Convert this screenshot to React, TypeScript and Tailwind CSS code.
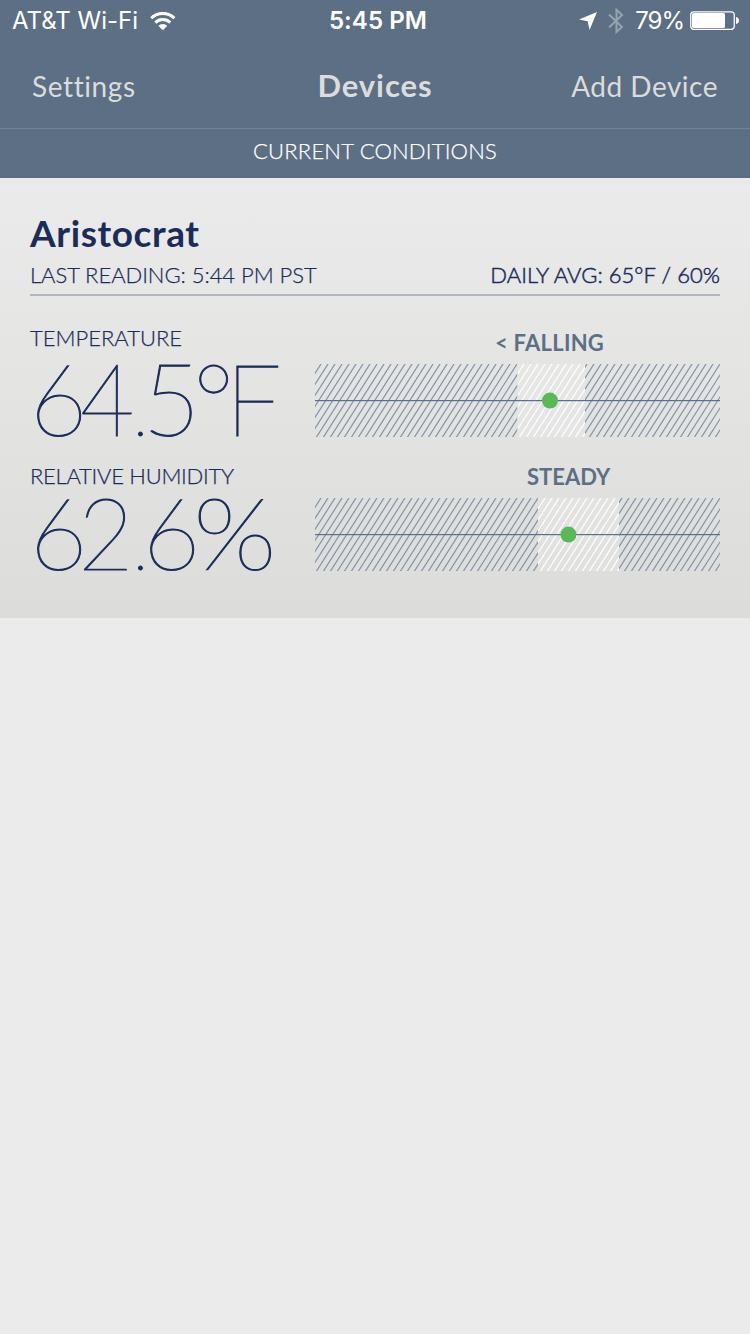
type Glyph = { ch: string; style: string };

type MetricProps = {
  id: string;
  label: string;
  labelStyle: string;
  glyphs: Glyph[];
  trend: string;
  trendStyle: string;
  from: number;
  to: number;
  value: number;
};

function Range({ id, from, to, value }: { id: string; from: number; to: number; value: number }) {
  const lines = Array.from({ length: 66 }, (_, i) => 6 + i * 7);
  const draw = (stroke: string) =>
    lines.map((x) => <line key={x} x1={x + 1.27} y1={-2} x2={x - 47.73} y2={75} stroke={stroke} strokeWidth={1.2} />);
  return (
    <svg width="405" height="73" viewBox="0 0 405 73" className="block shrink-0">
      <defs>
        <clipPath id={id + "-out"}>
          <rect x="0" y="0" width={from} height="73" />
          <rect x={to} y="0" width={405 - to} height="73" />
        </clipPath>
        <clipPath id={id + "-in"}>
          <rect x={from} y="0" width={to - from} height="73" />
        </clipPath>
      </defs>
      <rect x={from} y="0" width={to - from} height="73" fill="#ffffff" fillOpacity="0.1" />
      <g clipPath={`url(#${id}-out)`}>{draw("#8294a8")}</g>
      <g clipPath={`url(#${id}-in)`}>{draw("#ffffff")}</g>
      <rect x="0" y="36" width="405" height="1.2" fill="#5c6f8e" />
      <circle cx={value} cy="36.6" r="8" fill="#5ab955" />
    </svg>
  );
}

function Metric({ id, label, labelStyle, glyphs, trend, trendStyle, from, to, value }: MetricProps) {
  return (
    <section className="flex h-[134px]">
      <div className="w-[285px] shrink-0">
        <div className={`h-8 text-[22px] leading-9 font-light [-webkit-text-stroke:0.25px] ${labelStyle}`}>{label}</div>
        <div className="flex h-[90px] items-baseline text-[100px] leading-[90px] font-thin [-webkit-text-stroke:1px]">
          {glyphs.map((g, i) => (
            <span key={i} className={g.style}>
              {g.ch}
            </span>
          ))}
        </div>
      </div>
      <div className="w-[405px]">
        <div className="h-11 pt-[9px] text-[22px] leading-7 font-bold text-[#5c6f84]">
          <span className={trendStyle}>{trend}</span>
        </div>
        <Range id={id} from={from} to={to} value={value} />
      </div>
    </section>
  );
}

const temperature: Glyph[] = [
  { ch: "6", style: "-ml-[0.5px] mr-[-7.5px]" },
  { ch: "4", style: "mr-[-9.5px] origin-left scale-x-[0.94]" },
  { ch: ".", style: "ml-[5px] mr-[-5px] text-[60px]" },
  { ch: "5", style: "mr-[-7.5px]" },
  { ch: "°", style: "mr-[-11px]" },
  { ch: "F", style: "origin-left pl-0.5" },
];

const humidity: Glyph[] = [
  { ch: "6", style: "-ml-[0.5px] mr-[-10px]" },
  { ch: "2", style: "mr-[-7px] origin-left scale-x-[0.96]" },
  { ch: ".", style: "ml-[5px] mr-[-5px] text-[60px]" },
  { ch: "6", style: "mr-[-7.5px]" },
  { ch: "%", style: "origin-left scale-x-110" },
];

export default function App() {
  return (
    <div className="flex h-[1334px] w-[750px] flex-col bg-[#ebebeb] font-['Lato',sans-serif] text-[#1b2c5c] [font-variant-ligatures:none]">
      <header className="flex h-[178px] flex-col bg-[#5c6f84] text-white">
        <div className="grid h-[42px] grid-cols-[1fr_auto_1fr] items-center pr-2.5 pl-3 font-['Inter',sans-serif] text-2xl">
          <div className="flex items-center gap-3">
            <span>AT&amp;T Wi-Fi</span>
            <svg width="26" height="19" viewBox="0 0 26 19" fill="none" stroke="#fff" strokeWidth="3">
              <path d="M1.2 6.2a16.5 16.5 0 0 1 23.2 0M5.3 10.6a10.8 10.8 0 0 1 15 0" />
              <path d="M8.4 13.8a6.5 6.5 0 0 1 8.8 0l-4.4 4.4z" fill="#fff" stroke="none" />
            </svg>
          </div>
          <span className="pl-1 font-semibold tracking-[0.1px]">5:45 PM</span>
          <div className="flex items-center justify-end">
            <svg width="18" height="18" viewBox="0 0 18 18" className="mr-[11px]">
              <path d="M18 0L10.500 18L8.700 9.300L0 7.500z" fill="#fff" />
            </svg>
            <svg width="16" height="28" viewBox="0 0 16 28" className="mr-[11px]" fill="none" stroke="#95a2b0" strokeWidth="2">
              <path d="M1 7.5L14 20 8.500 25V2.800L14 8 1 20.5" />
            </svg>
            <span className="mr-1.5 tracking-[-1px]">79%</span>
            <svg width="50" height="19" viewBox="0 0 50 19" className="-translate-y-px">
              <rect x="0.75" y="0.75" width="43.5" height="17.5" rx="3" fill="none" stroke="#fff" strokeWidth="1.25" />
              <rect x="2" y="2" width="33" height="15" rx="1.5" fill="#fff" />
              <path d="M46 6c4 .5 4 6.500 0 7z" fill="#fff" />
            </svg>
          </div>
        </div>
        <div className="grid h-[86px] grid-cols-3 items-baseline px-8 pt-[23px] text-[28px] leading-10 text-[#dcdcda]">
          <span className="tracking-[0.6px]">Settings</span>
          <span className="text-center text-[31px] font-bold tracking-[0.9px]">Devices</span>
          <span className="text-right tracking-[0.5px]">Add Device</span>
        </div>
        <div className="h-[50px] border-t border-[#74859a] text-center text-[22px] leading-[44px] font-light tracking-[0.2px] [-webkit-text-stroke:0.25px]">
          CURRENT CONDITIONS
        </div>
      </header>
      <main className="h-[440px] bg-linear-to-b from-[#ebebeb] to-[#dcdcda] px-[30px] pt-[30px]">
        <h1 className="h-[51px] text-[37px] leading-[50px] font-bold tracking-[0.6px]">Aristocrat</h1>
        <div className="flex h-[37px] justify-between border-b-2 border-[#b0b6c4] text-[22px] leading-8">
          <span className="font-light tracking-[-0.05px] [-webkit-text-stroke:0.25px]">LAST READING: 5:44 PM PST</span>
          <span className="font-light tracking-[0.05px] [-webkit-text-stroke:0.5px]">DAILY AVG: 65°F / 60%</span>
        </div>
        <div className="pt-6">
          <Metric
            id="temperature"
            label="TEMPERATURE"
            labelStyle=""
            glyphs={temperature}
            trend="< FALLING"
            trendStyle="ml-[180px] tracking-[0.25px]"
            from={202.5}
            to={270}
            value={235}
          />
          <Metric
            id="humidity"
            label="RELATIVE HUMIDITY"
            labelStyle="translate-y-1 tracking-[-0.27px]"
            glyphs={humidity}
            trend="STEADY"
            trendStyle="ml-[212px]"
            from={223}
            to={304}
            value={253.5}
          />
        </div>
      </main>
    </div>
  );
}
